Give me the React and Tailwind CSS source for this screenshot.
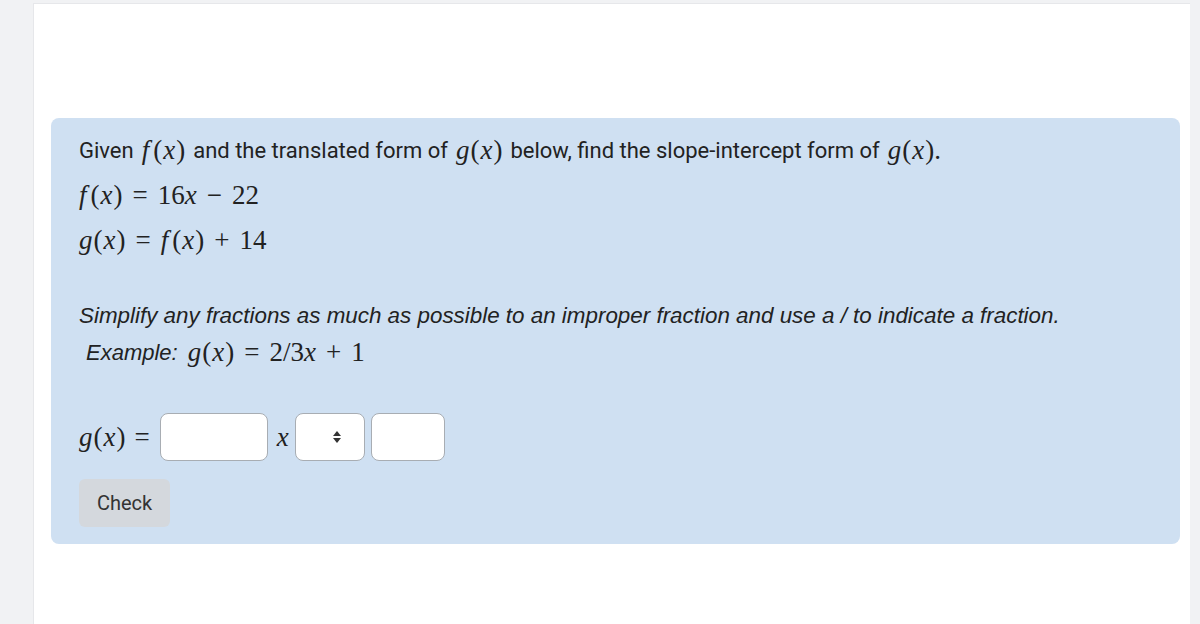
import React from 'react';

const serif = { fontFamily: '"Liberation Serif", "DejaVu Serif", serif' };
const arial = { fontFamily: '"Liberation Sans", Arial, sans-serif' };

function M({ children, className = '' }) {
  return (
    <span className={`text-[27px] leading-none whitespace-nowrap ${className}`} style={serif}>
      {children}
    </span>
  );
}

function I({ children, className = '' }) {
  return <i className={`italic ${className}`}>{children}</i>;
}

function Fn({ name }) {
  return (
    <>
      <I className={name === 'f' ? 'mr-[4px]' : 'mr-[1px]'}>{name}</I>(<I className="mx-[1px]">x</I>)
    </>
  );
}

function Op({ children }) {
  return <span className="mx-[10px]">{children}</span>;
}

export default function App() {
  return (
    <div className="w-[1200px] h-[624px] bg-[#f1f2f4] overflow-hidden" style={{ fontFamily: 'Roboto, "Liberation Sans", sans-serif' }}>
      <div className="ml-[33px] mr-[10px] mt-[3px] h-[621px] bg-white border-t border-l border-[#e6e7ea] pt-[114px] pl-[17px] pr-[10px]">
        <div className="bg-[#cfe0f2] rounded-lg pl-[28px] pr-6 pt-[18px] pb-[17px] text-[#222] text-[22px]">
          <p className="h-[28px] flex items-center gap-[8px]">
            <span>Given</span>
            <M><Fn name="f" /></M>
            <span>and the translated form of</span>
            <M><Fn name="g" /></M>
            <span>below, find the slope-intercept form of</span>
            <M><Fn name="g" />.</M>
          </p>
          <p className="mt-[17px] h-[28px] flex items-center">
            <M><Fn name="f" /><Op>=</Op>16<I>x</I><Op>−</Op>22</M>
          </p>
          <p className="mt-[17px] h-[28px] flex items-center">
            <M><Fn name="g" /><Op>=</Op><Fn name="f" /><Op>+</Op>14</M>
          </p>

          <p className="mt-[48px] italic h-[28px] flex items-center text-[22.4px]" style={arial}>
            Simplify any fractions as much as possible to an improper fraction and use a / to indicate a fraction.
          </p>
          <p className="mt-[8px] h-[28px] flex items-center gap-[10px] pl-[7px]">
            <span className="italic" style={arial}>Example:</span>
            <M><Fn name="g" /><Op>=</Op>2/3<I>x</I><Op>+</Op>1</M>
          </p>

          <div className="mt-[47px] flex items-center">
            <M className="mr-[10px]"><Fn name="g" /><span className="ml-[9px]">=</span></M>
            <input className="w-[108px] h-[48px] bg-white rounded-lg border border-[#a8adb3] outline-none" />
            <M className="ml-[9px] mr-[6px]"><I>x</I></M>
            <div className="w-[70px] h-[48px] bg-white rounded-lg border border-[#a8adb3] flex items-center justify-end pr-[22px]">
              <svg width="10" height="14" viewBox="0 0 10 14">
                <path d="M5 1 L9 6 H1 Z" fill="#333" />
                <path d="M5 13 L9 8 H1 Z" fill="#333" />
              </svg>
            </div>
            <input className="ml-[6px] w-[74px] h-[48px] bg-white rounded-lg border border-[#a8adb3] outline-none" />
          </div>

          <button className="mt-[18px] w-[91px] h-[48px] rounded-md bg-[#d4d8dd] text-[#333] text-[20px]">
            Check
          </button>
        </div>
      </div>
    </div>
  );
}
